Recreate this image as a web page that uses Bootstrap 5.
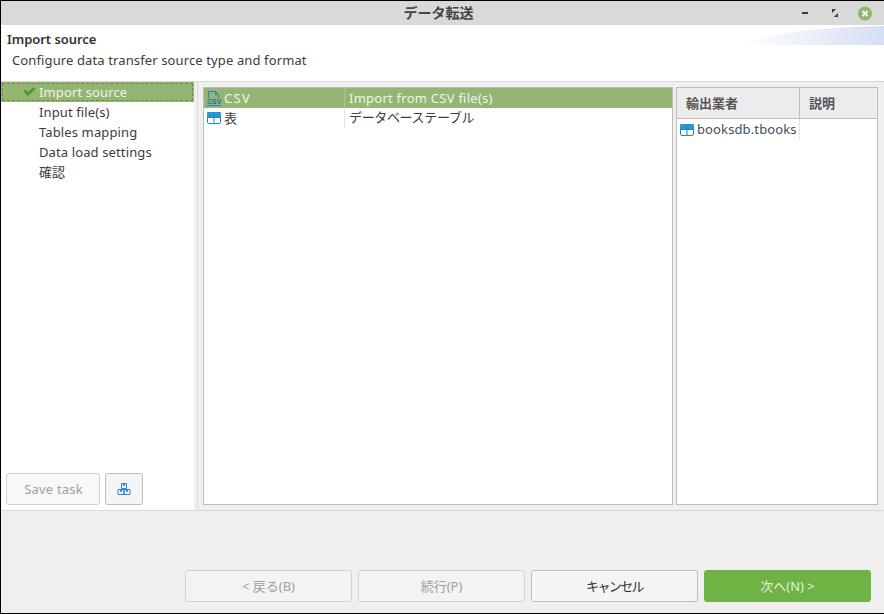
<!DOCTYPE html>
<html lang="ja">
<head>
    <meta charset="UTF-8">
    <title>データ転送</title>
    <link href="https://cdn.jsdelivr.net/npm/bootstrap@5.3.0/dist/css/bootstrap.min.css" rel="stylesheet">
    <style>
        html, body { height: 100%; overflow: hidden; }
        body {
            background: #000;
            font-family: "Noto Sans", "Noto Sans CJK JP", sans-serif;
            font-size: 13px;
            color: #3c3c3c;
        }
        .app-window {
            height: 614px;
            padding: 1px 0 1px 1px;
        }
        .app-inner { height: 100%; background: #efefef; }
        .title-bar {
            height: 24px;
            background: #d9d9d9;
            position: relative;
            padding-right: 8px;
        }
        .title-text { font-size: 14px; font-weight: 600; color: #444; line-height: 24px; }
        .win-btns { position: absolute; right: 0; top: 0; height: 24px; }
        .head-area {
            height: 57px;
            background: #fff;
            position: relative;
            border-bottom: 1px solid #d8d8d8;
        }
        .head-swoosh { position: absolute; right: 0; top: 0; }
        .head-title { font-weight: 600; color: #333; padding: 5px 0 0 6px; line-height: 18px; font-size: 13px; letter-spacing: -.05px; }
        .head-desc { padding: 3px 0 0 11px; line-height: 18px; letter-spacing: .12px; }
        .main-area { height: 429px; border-bottom: 1px solid #d8d8d8; }
        .left-pane {
            width: 193px;
            background: #fff;
        }
        .step-item { height: 20px; line-height: 20px; padding-left: 38px; position: relative; letter-spacing: .12px; }
        .step-on { background: #94b573; color: #eef5e6; outline: 1px dashed #6f8f50; outline-offset: -2px; }
        .step-check { position: absolute; left: 22px; top: 4px; }
        .pane-gap { width: 3px; }
        .right-panes { gap: 3px; padding: 5px 5px 5px 5px; border-left: 1px solid #dcdcdc; }
        .list-box { background: #fff; border: 1px solid #bdbdbd; }
        .src-list { width: 470px; }
        .src-row { height: 20px; line-height: 20px; }
        .src-row-on { background: #94b573; color: #eef5e6; }
        .src-a { width: 141px; padding-left: 2px; gap: 2px; border-right: 1px solid #e3e3e3; }
        .src-row-on .src-a { border-right-color: #a9c48e; }
        .src-b { padding-left: 4px; letter-spacing: .25px; }
        .csv-name { letter-spacing: 1.3px; }
        .kana-tight { letter-spacing: -.35px; line-height: 18px; }
        .exp-list { width: 202px; }
        .exp-head { height: 31px; background: #ececec; border-bottom: 1px solid #bdbdbd; font-weight: 600; color: #555; line-height: 30px; }
        .exp-a { width: 123px; padding-left: 9px; border-right: 1px solid #bdbdbd; }
        .exp-b { padding-left: 9px; }
        .exp-row { height: 21px; line-height: 21px; margin-top: 0; color: #3f4d5c; }
        .exp-row .exp-a { padding-left: 2px; gap: 2px; border-right: 1px solid #e3e3e3; letter-spacing: .12px; }
        .btn-app {
            height: 32px;
            font-size: 13px;
            padding: 1px 0 0;
            border-radius: 3px;
            border: 1px solid #bdbdbd;
            background: #f5f5f5;
            color: #333;
        }
        .btn-app:disabled { opacity: 1; color: #a0a0a0; border-color: #d2d2d2; background: #f3f3f3; }
        .btn-save { width: 94px; background: #f8f8f8 !important; letter-spacing: .2px; padding-left: 1px; }
        .btn-box { width: 38px; }
        .btn-wiz { width: 167px; }
        .btn-cancel { letter-spacing: -1.6px; }
        .btn-next { background: #6fb345; border-color: #6fb345; color: #e4f2d8; }
        .foot-area { flex: 1; padding: 0 13px 11px 184px; gap: 6px; }
        .task-row { padding: 0 0 5px 5px; gap: 5px; }
    </style>
</head>
<body>
    <div class="app-window">
        <div class="app-inner d-flex flex-column">
            <div class="title-bar text-center">
                <span class="title-text">データ転送</span>
                <div class="win-btns d-flex align-items-center">
                    <svg width="94" height="24" viewBox="0 0 94 24">
                        <rect x="12" y="11" width="6" height="2" fill="#3c3c3c"/>
                        <path d="M42 12l4-4h-4zM48 12l-4 4h4z" fill="#3c3c3c"/>
                        <circle cx="75" cy="12.5" r="7" fill="#8fb867"/>
                        <path d="M72.500 10l5 5M77.500 10l-5 5" stroke="#fff" stroke-width="1.800"/>
                    </svg>
                </div>
            </div>
            <div class="head-area">
                <svg class="head-swoosh" width="142" height="20" viewBox="0 0 142 20">
                    <defs><linearGradient id="sw" x1="0" x2="1"><stop offset="0" stop-color="#fff"/><stop offset="1" stop-color="#d5def3"/></linearGradient></defs>
                    <path d="M0 20C20 10 70 2 142 1V20z" fill="url(#sw)"/>
                </svg>
                <div class="head-title">Import source</div>
                <div class="head-desc">Configure data transfer source type and format</div>
            </div>
            <div class="main-area d-flex">
                <div class="left-pane d-flex flex-column">
                    <div class="step-item step-on">
                        <svg class="step-check" width="13" height="10" viewBox="0 0 13 10"><path d="M1.500 4.500l3.500 3.500L11.500 2" fill="none" stroke="#4f9a2f" stroke-width="3"/></svg>
                        Import source
                    </div>
                    <div class="step-item">Input file(s)</div>
                    <div class="step-item">Tables mapping</div>
                    <div class="step-item">Data load settings</div>
                    <div class="step-item">確認</div>
                    <div class="task-row d-flex mt-auto">
                        <button class="btn btn-app btn-save" disabled>Save task</button>
                        <button class="btn btn-app btn-box d-flex align-items-center justify-content-center">
                            <svg width="14" height="14" viewBox="0 0 14 14" fill="none" stroke="#2a87d0"><path d="M4.500 .5h5v5h-5zM1 6.500h6v5H1zM7 6.500h6v5H7zM6.500 .5v2h1v-2M3.500 6.500v2h1v-2M9.500 6.500v2h1v-2"/></svg>
                        </button>
                    </div>
                </div>
                <div class="pane-gap"></div>
                <div class="right-panes d-flex flex-grow-1">
                    <div class="list-box src-list">
                        <div class="src-row src-row-on d-flex">
                            <div class="src-a d-flex align-items-center">
                                <svg width="16" height="16" viewBox="0 0 16 16" fill="none" stroke="#1f86cc"><path d="M2.500 8V1.500h7l3 3V8M9.500 1.500v3h3"/><path d="M1 15.500h14" stroke-width="1"/><text x="1" y="14" font-size="7" font-family="Liberation Sans" font-weight="700" fill="#1f6fa8" stroke="none">CSV</text></svg>
                                <span class="csv-name">CSV</span>
                            </div>
                            <div class="src-b">Import from CSV file(s)</div>
                        </div>
                        <div class="src-row d-flex">
                            <div class="src-a d-flex align-items-center">
                                <svg width="16" height="16" viewBox="0 0 16 16"><rect x="1.500" y="2.500" width="13" height="11" rx="1.500" fill="#fff" stroke="#1f86cc"/><rect x="1" y="2" width="14" height="5" rx="1" fill="#2a98d8"/><path d="M8 2v12M1 7.500h14" stroke="#1f86cc"/></svg>
                                <span>表</span>
                            </div>
                            <div class="src-b kana-tight">データベーステーブル</div>
                        </div>
                    </div>
                    <div class="list-box exp-list">
                        <div class="exp-head d-flex">
                            <div class="exp-a">輸出業者</div>
                            <div class="exp-b">説明</div>
                        </div>
                        <div class="exp-row d-flex">
                            <div class="exp-a d-flex align-items-center">
                                <svg width="16" height="16" viewBox="0 0 16 16" class="flex-shrink-0"><rect x="1.500" y="2.500" width="13" height="11" rx="1.500" fill="#fff" stroke="#1f86cc"/><rect x="1" y="2" width="14" height="5" rx="1" fill="#2a98d8"/><path d="M8 2v12M1 7.500h14" stroke="#1f86cc"/></svg>
                                <span>booksdb.tbooks</span>
                            </div>
                        </div>
                    </div>
                </div>
            </div>
            <div class="foot-area d-flex align-items-end">
                <button class="btn btn-app btn-wiz" disabled>&lt; 戻る(B)</button>
                <button class="btn btn-app btn-wiz" disabled>続行(P)</button>
                <button class="btn btn-app btn-wiz btn-cancel">キャンセル</button>
                <button class="btn btn-app btn-wiz btn-next">次へ(N) &gt;</button>
            </div>
        </div>
    </div>
    <script src="https://cdn.jsdelivr.net/npm/bootstrap@5.3.0/dist/js/bootstrap.bundle.min.js"></script>
</body>
</html>
